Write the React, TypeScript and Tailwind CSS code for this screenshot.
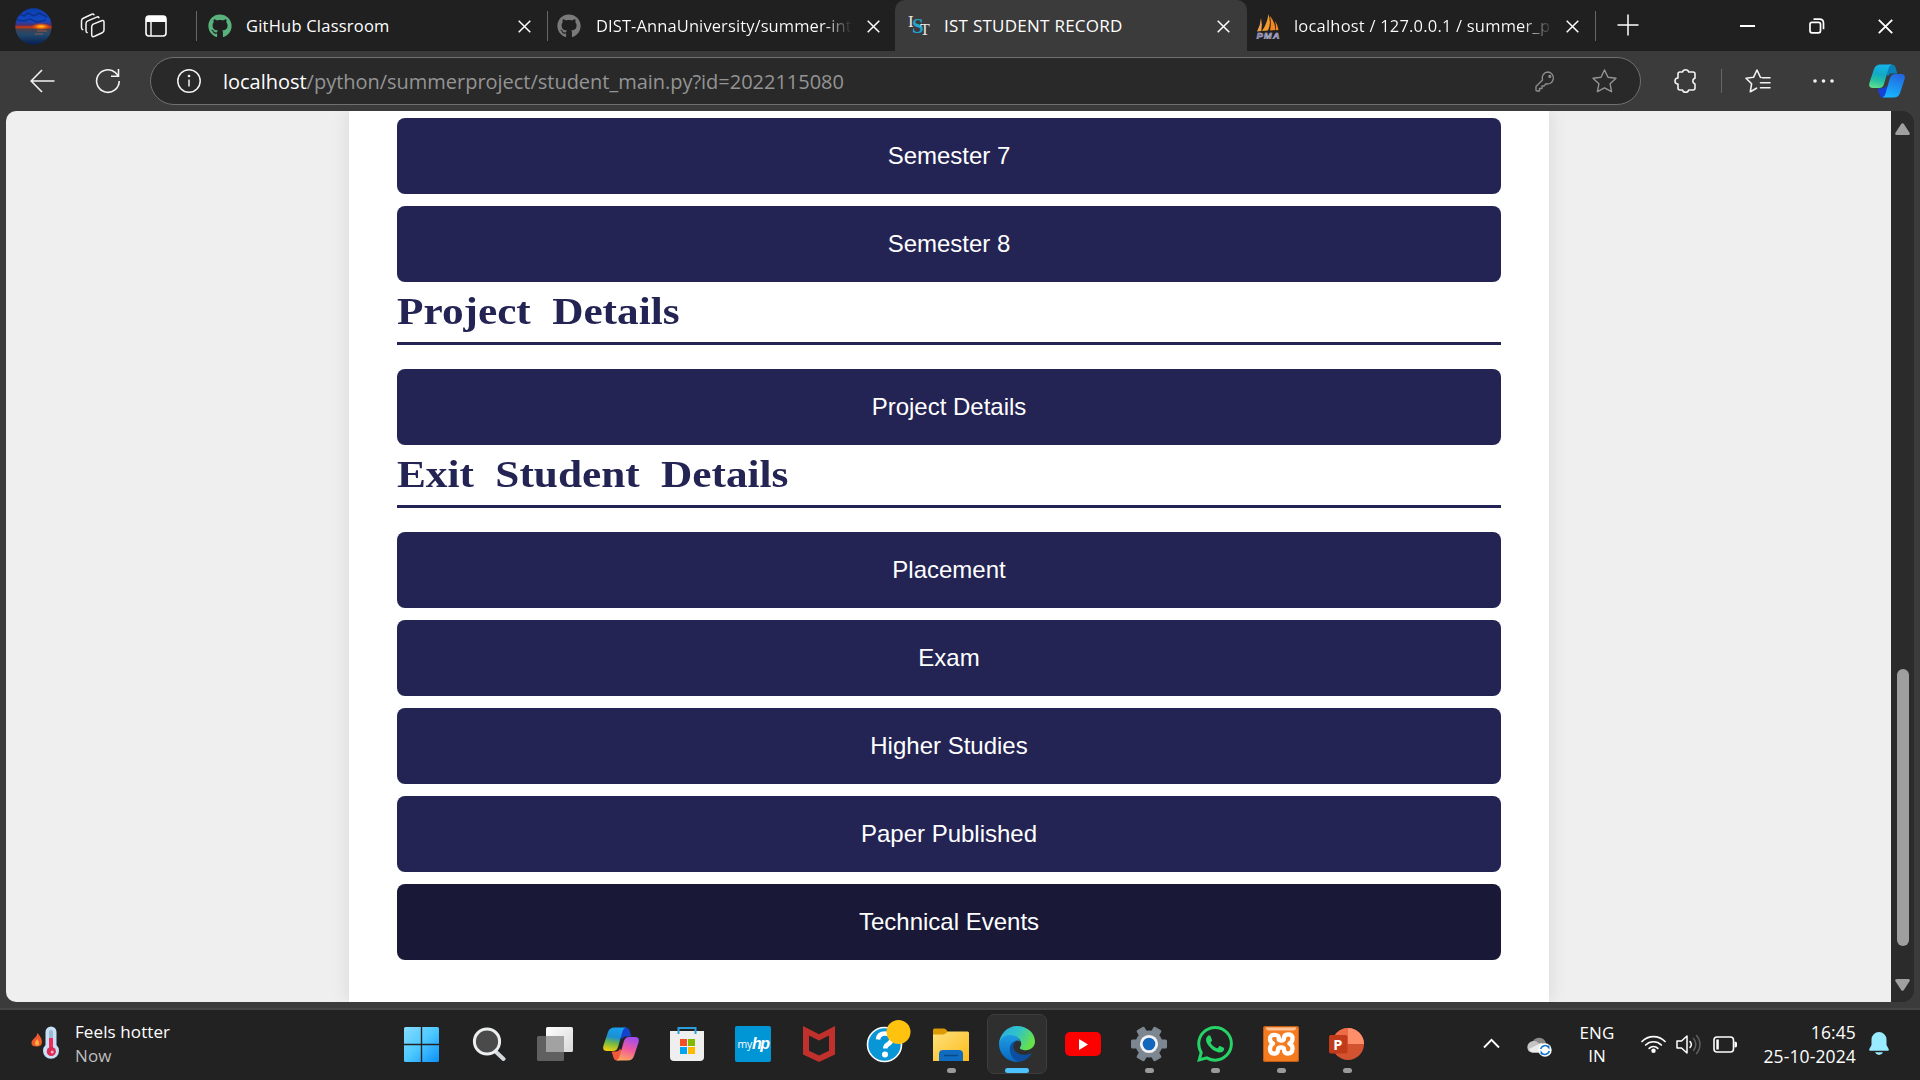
import type { ReactNode } from "react";
import { FaGithub } from "react-icons/fa";
import { SiWhatsapp } from "react-icons/si";

const ui = "font-['Open_Sans','Noto_Sans',sans-serif]";

function CloseIcon({ size = 13, w = 1.5 }: { size?: number; w?: number }) {
  return (
    <svg width={size} height={size} viewBox="0 0 13 13" fill="none" stroke="#fff" strokeWidth={w} className="shrink-0">
      <path d="M.7.7l11.6 11.6M12.3.7L.7 12.3" />
    </svg>
  );
}

function Avatar() {
  return (
    <svg width="37" height="37" viewBox="0 0 37 37" className="ml-[15px] shrink-0">
      <defs>
        <linearGradient id="sky" x1="0" y1="0" x2="0" y2="1">
          <stop offset="0" stopColor="#0b3fae" />
          <stop offset=".35" stopColor="#1448c4" />
          <stop offset=".46" stopColor="#4a2f72" />
          <stop offset=".52" stopColor="#d0390c" />
          <stop offset=".57" stopColor="#44414f" />
          <stop offset=".72" stopColor="#21486c" />
          <stop offset="1" stopColor="#061d52" />
        </linearGradient>
        <radialGradient id="sun">
          <stop offset="0" stopColor="#ffd21e" />
          <stop offset=".4" stopColor="#ff7a08" />
          <stop offset="1" stopColor="#ff3a00" stopOpacity="0" />
        </radialGradient>
        <clipPath id="avc"><circle cx="18.5" cy="18.5" r="18.2" /></clipPath>
      </defs>
      <g clipPath="url(#avc)">
        <rect width="37" height="37" fill="url(#sky)" />
        <path d="M4 6l5 2 4-3 6 3 5-3 8 4M2 12l7 1 6-2 7 3 9-2" stroke="#082a78" strokeWidth="1.5" fill="none" opacity=".7" />
        <ellipse cx="26" cy="18.5" rx="10" ry="3.6" fill="url(#sun)" />
        <path d="M22 23h10M20 26h8" stroke="#d9683a" opacity=".6" />
      </g>
    </svg>
  );
}

function TabSep() {
  return <div className="h-[30px] w-px shrink-0 bg-[#666]" />;
}

function TabBar() {
  return (
    <div className="flex h-[51px] w-full shrink-0 items-center bg-[#202020] pt-px text-[16.5px] text-white">
      <Avatar />
      <svg width="26" height="26" viewBox="0 0 26 26" fill="none" stroke="#f2f2f2" strokeWidth="1.5" strokeLinejoin="round" strokeLinecap="round" className="ml-[28px] shrink-0">
        <path d="M12.6 11.4l9-3.7q2.4-.8 2.4 1.6v7.6q0 2-1.8 2.8l-7.6 3.6q-2.9 1.2-2.9-1.5v-7.9q0-1.8 1.3-2.5z" />
        <path d="M7.2 19.6q-1.2-.4-1.2-2.2v-6.7q0-2 1.8-2.8l8.9-3.8q1.7-.6 2.2.5" />
        <path d="M2.7 16.6Q1.5 16 1.5 14.400V8q0-2 1.8-2.800L11.800 1.300q1.600-.6 2.200.5" />
      </svg>
      <svg width="22" height="22" viewBox="0 0 22 22" className="ml-[39px] shrink-0">
        <rect x="1" y="1" width="20" height="20" rx="3" fill="none" stroke="#fff" strokeWidth="1.6" />
        <path d="M1 7V4q0-3 3-3h14q3 0 3 3v3z" fill="#fff" />
        <path d="M6 7v14" stroke="#fff" strokeWidth="1.4" />
      </svg>
      <div className="ml-[29px] flex"><TabSep /></div>
      <div className="flex h-full w-[350px] shrink-0 items-center pl-[11px]">
        <FaGithub size={24} color="#59b17b" className="shrink-0" />
        <span className="ml-[14px] w-[272px] whitespace-nowrap tracking-[0.22px]">GitHub Classroom</span>
        <CloseIcon />
      </div>
      <TabSep />
      <div className="flex h-full w-[347px] shrink-0 items-center pl-[9px]">
        <FaGithub size={24} color="#7a7a7a" className="shrink-0" />
        <span className="ml-[15px] w-[259px] whitespace-nowrap bg-linear-to-r from-white from-88% to-[#202020] to-99% bg-clip-text tracking-[0.1px] text-transparent">
          DIST-AnnaUniversity/summer-int
        </span>
        <span className="ml-[12px]"><CloseIcon /></span>
      </div>
      <div className="-mt-px flex h-[51px] w-[352px] shrink-0 items-center rounded-t-[10px] bg-[#3b3b3b] pt-px pl-[13px]">
        <svg width="24" height="24" viewBox="0 0 24 24" className="shrink-0 font-['Liberation_Serif',serif]">
          <text x="0" y="13" fontSize="17" fill="#e8e8e8">I</text>
          <text x="4" y="19" fontSize="21" fill="#1fa6d0" fontWeight="bold">S</text>
          <text x="12" y="21" fontSize="16" fill="#e8e8e8">T</text>
        </svg>
        <span className="ml-[12px] w-[273px] text-[17px] whitespace-nowrap tracking-[0.26px]">IST STUDENT RECORD</span>
        <CloseIcon />
      </div>
      <div className="flex h-full w-[348px] shrink-0 items-center pl-[9px]">
        <svg width="24" height="25" viewBox="0 0 24 25" className="shrink-0">
          <path d="M5 4q1.500 7 .3 13l-4.300.6Q4.500 11 5 4z" fill="#f0a04b" />
          <path d="M12.500 0q3 9-.5 16.500l-6 .5Q11 10 12.500 0z" fill="#f39c2d" />
          <path d="M14 2q5 6 5.500 14l-5.500.5Q15.500 9 14 2zM19 7q3 4 3.500 9l-2.500.3Q20.300 11 19 7z" fill="#f5871f" />
          <text x="0.500" y="24.500" fontSize="9.500" fontWeight="bold" fontStyle="italic" fontFamily="Liberation Sans" fill="#5c5c9c" stroke="#c9c9dc" strokeWidth=".5" textLength="23">PMA</text>
        </svg>
        <span className="ml-[14px] w-[260px] whitespace-nowrap bg-linear-to-r from-white from-88% to-[#202020] bg-clip-text tracking-[0.2px] text-transparent">
          localhost / 127.0.0.1 / summer_p
        </span>
        <span className="ml-[12px]"><CloseIcon /></span>
      </div>
      <TabSep />
      <svg width="22" height="22" viewBox="0 0 22 22" stroke="#fff" strokeWidth="1.5" className="-mt-[3px] ml-[21px] shrink-0"><path d="M11 .5v21M.5 11h21" /></svg>
      <div className="-mt-px ml-[101px] h-[2px] w-[15px] bg-white" />
      <svg width="16" height="16" viewBox="0 0 16 16" fill="none" stroke="#fff" strokeWidth="1.7" className="ml-[54px] shrink-0">
        <rect x="1" y="4.300" width="10.500" height="10.500" rx="2" />
        <path d="M4.500 1.200h6q4 0 4 4v6" />
      </svg>
      <span className="ml-[53px]"><CloseIcon size={15} w={1.6} /></span>
    </div>
  );
}

function CopilotMark({ blue, size }: { blue?: boolean; size: number }) {
  const p = blue ? "b" : "c";
  return (
    <svg width={size} height={size} viewBox="0 0 36 36" className="shrink-0">
      <defs>
        <linearGradient id={p + "1"} x1=".5" y1="0" x2=".3" y2="1">
          <stop offset="0" stopColor={blue ? "#12b4ea" : "#18a0f0"} />
          <stop offset=".4" stopColor={blue ? "#14a9c6" : "#1c8fd0"} />
          <stop offset=".65" stopColor={blue ? "#22bda6" : "#6cb84a"} />
          <stop offset="1" stopColor={blue ? "#5fe08c" : "#f2cf0e"} />
        </linearGradient>
        <linearGradient id={p + "2"} x1=".6" y1="0" x2=".3" y2="1">
          <stop offset="0" stopColor={blue ? "#2468e0" : "#a24df0"} />
          <stop offset=".5" stopColor={blue ? "#1b90f0" : "#ee5a9c"} />
          <stop offset="1" stopColor={blue ? "#18b8ff" : "#ffa65c"} />
        </linearGradient>
      </defs>
      <path d="M20 1.500h3q2.600 0 3.400 2.500l2 6.500H23q-3 0-4 3L16 8z" fill={blue ? "#0880b8" : "#1542cc"} />
      <path d="M16 34.500h-2q-2.600 0-3.400-2.500l-2-6.500H13q3 0 4-3l3 5z" fill={blue ? "#1740d8" : "#f0583a"} />
      <path d="M11.500 1.500H23q-2.500.5-3.500 4l-4.300 15q-1.200 4.500-5.200 4.500H4q-5 0-3.500-5.500L5 6q1.500-4.500 6.500-4.500z" fill={`url(#${p}1)`} />
      <path d="M24.500 34.500H13q2.500-.5 3.500-4l4.300-15q1.200-4.500 5.200-4.500h6q5 0 3.500 5.500L31 30q-1.500 4.500-6.500 4.500z" fill={`url(#${p}2)`} />
    </svg>
  );
}

function Toolbar() {
  return (
    <div className="flex h-[60px] w-full shrink-0 items-center bg-[#3b3b3b] pl-[30px]">
      <svg width="25" height="24" viewBox="0 0 25 24" fill="none" stroke="#f2f2f2" strokeWidth="1.600" className="shrink-0"><path d="M12 1L1.200 12 12 23M1.200 12H24.500" /></svg>
      <svg width="26" height="26" viewBox="0 0 26 26" fill="none" stroke="#f2f2f2" strokeWidth="1.600" className="ml-[40px] shrink-0">
        <path d="M24.200 13A11.300 11.300 0 1 1 20.500 4.700L23.500 8M23.500 1v7.200h-7.500" />
      </svg>
      <div className="ml-[29px] flex h-[48px] w-[1491px] shrink-0 items-center rounded-full border border-[#707070] bg-[#292929] pl-[26px]">
        <svg width="24" height="24" viewBox="0 0 24 24" fill="none" stroke="#f2f2f2" strokeWidth="1.500" className="shrink-0">
          <circle cx="12" cy="12" r="11.200" /><path d="M12 10.500v7" /><circle cx="12" cy="7" r=".6" fill="#fff" />
        </svg>
        <span className="ml-[22px] w-[1312px] pt-px text-[20px] whitespace-nowrap tracking-[-0.02px] text-[#949494]">
          <span className="text-white">localhost</span>/python/summerproject/student_main.py?id=2022115080
        </span>
        <svg width="20" height="21" viewBox="0 0 20 21" fill="none" stroke="#8c8c8c" strokeWidth="1.400" strokeLinejoin="round" className="shrink-0">
          <path d="M13 1a6 6 0 0 0-5.500 8L1 15.500V19q0 1 1 1h2.500v-2.500H7V15h2l2-2.200A6 6 0 1 0 13 1z" /><circle cx="14.800" cy="5.400" r=".9" />
        </svg>
        <svg width="25" height="24" viewBox="0 0 25 24" fill="none" stroke="#949494" strokeWidth="1.400" strokeLinejoin="round" className="ml-[37px] shrink-0">
          <path d="M12.500 1l3.500 7.300 8 1-5.900 5.500 1.500 7.900-7.100-3.900-7.100 3.900 1.500-7.900L1 9.300l8-1z" />
        </svg>
      </div>
      <svg width="24" height="26" viewBox="0 0 24 26" fill="none" stroke="#f2f2f2" strokeWidth="1.600" strokeLinejoin="round" className="ml-[32px] shrink-0">
        <path d="M9.500 4a3.200 3 0 0 1 6.200 0H20q2 0 2 2v4.300a2.900 2.900 0 0 0 0 5.600V20q0 2-2 2h-4.300a3.200 3 0 0 1-6.200 0H7q-2 0-2-2v-4a3 3 0 0 1 0-6V6q0-2 2-2z" />
      </svg>
      <div className="ml-[24px] h-[24px] w-px bg-[#666]" />
      <svg width="26" height="24" viewBox="0 0 26 24" fill="none" stroke="#f2f2f2" strokeWidth="1.600" strokeLinejoin="round" strokeLinecap="round" className="ml-[23px] shrink-0">
        <path d="M16 8.500h-.5L12 1 8.500 8.300 1 9.300l5.600 5.500L5.300 22.700l6.200-3.500M17.500 8.800h7.500M15.500 13.800h9.500M15.500 18.700h9.500" />
      </svg>
      <svg width="21" height="4" viewBox="0 0 21 4" fill="#f2f2f2" className="ml-[42px] shrink-0"><circle cx="2" cy="2" r="1.800" /><circle cx="10.500" cy="2" r="1.800" /><circle cx="19" cy="2" r="1.800" /></svg>
      <span className="ml-[35px]"><CopilotMark blue size={36} /></span>
    </div>
  );
}

function MenuButton({ label, hovered }: { label: string; hovered?: boolean }) {
  return (
    <button
      className={
        "flex h-[76px] w-full shrink-0 items-center justify-center rounded-[8px] font-['Liberation_Sans',sans-serif] text-[24px] text-white " +
        (hovered ? "bg-[#191937]" : "bg-[#242454]")
      }
    >
      {label}
    </button>
  );
}

function SectionTitle({ children }: { children: ReactNode }) {
  return (
    <h2 className="mb-[24px] h-[63px] w-full shrink-0 border-b-[3px] border-[#242454] pt-[9px] font-['Liberation_Serif',serif] text-[37px] leading-[42px] font-bold whitespace-nowrap text-[#242454] [word-spacing:9px]">
      <span className="inline-block origin-left scale-x-[1.17]">{children}</span>
    </h2>
  );
}

function Page() {
  return (
    <div className="flex h-[891px] w-[1885px] overflow-hidden rounded-l-[10px] bg-[#efefef]">
      <main className="ml-[343px] flex h-[891px] w-[1200px] flex-col bg-white px-[48px] pt-[7px] shadow-[0_0_19px_rgba(0,0,0,0.1)]">
        <div className="flex flex-col gap-3">
          <MenuButton label="Semester 7" />
          <MenuButton label="Semester 8" />
        </div>
        <SectionTitle>Project Details</SectionTitle>
        <MenuButton label="Project Details" />
        <SectionTitle>Exit Student Details</SectionTitle>
        <div className="flex flex-col gap-3">
          <MenuButton label="Placement" />
          <MenuButton label="Exam" />
          <MenuButton label="Higher Studies" />
          <MenuButton label="Paper Published" />
          <MenuButton label="Technical Events" hovered />
        </div>
      </main>
    </div>
  );
}

function ScrollBar() {
  return (
    <div className="flex h-[891px] w-[23px] flex-col items-center rounded-r-[12px] bg-[#2b2b2b] pt-[12px]">
      <svg width="15" height="12" viewBox="0 0 15 12" fill="#a0a0a0"><path d="M6.300.8q1.200-1.200 2.400 0l6 9.200q.5 2-1.500 2H1.800q-2 0-1.500-2z" /></svg>
      <div className="mt-[534px] h-[277px] w-[12px] rounded-full bg-[#9f9f9f]" />
      <svg width="15" height="12" viewBox="0 0 15 12" fill="#a0a0a0" className="mt-[33px]"><path d="M6.300 11.200q1.200 1.200 2.400 0l6-9.200q.5-2-1.500-2H1.800q-2 0-1.500 2z" /></svg>
    </div>
  );
}

function TaskIcon({ children, running, active }: { children: ReactNode; running?: boolean; active?: boolean }) {
  return (
    <div className={"relative flex h-[60px] w-[60px] shrink-0 items-center justify-center rounded-[7px] " + (active ? "border border-[#3d3d3d] bg-[#2f2f2f]" : "")}>
      {children}
      {running && <div className="absolute bottom-px left-[25.5px] h-[5px] w-[9px] rounded-full bg-[#9a9a9a]" />}
      {active && <div className="absolute bottom-0 left-[17px] h-[5px] w-[24px] rounded-full bg-[#4cc2ff]" />}
    </div>
  );
}

function Apps() {
  return (
    <div className="flex gap-[6px]">
      <div className="mr-[2px]">
        <TaskIcon>
          <svg width="35" height="35" viewBox="0 0 35 35">
            <defs><linearGradient id="win" gradientUnits="userSpaceOnUse" x1="0" y1="0" x2="35" y2="35"><stop offset="0" stopColor="#88dcfc" /><stop offset=".5" stopColor="#4cc8ff" /><stop offset="1" stopColor="#0c90fa" /></linearGradient></defs>
            <g fill="url(#win)"><path d="M1.500 0H16.800v16.800H0V1.500Q0 0 1.500 0z" /><path d="M18.200 0H33.500Q35 0 35 1.500v15.300H18.200z" /><path d="M0 18.200h16.800V35H1.500Q0 35 0 33.500z" /><path d="M18.200 18.200H35v15.300q0 1.500-1.500 1.500H18.200z" /></g>
          </svg>
        </TaskIcon>
      </div>
      <TaskIcon>
        <svg width="34" height="36" viewBox="0 0 34 36" fill="none">
          <path d="M23 25l8.500 8" stroke="#d5d9dc" strokeWidth="4" strokeLinecap="round" />
          <circle cx="15" cy="15.500" r="12.600" fill="#4a4a4a" stroke="#eceeef" strokeWidth="3" />
        </svg>
      </TaskIcon>
      <TaskIcon>
        <svg width="36" height="34" viewBox="0 0 36 34">
          <defs><linearGradient id="tv" x1="0" y1="0" x2="1" y2="1"><stop offset="0" stopColor="#fff" /><stop offset="1" stopColor="#d8d8d8" /></linearGradient></defs>
          <rect x="9" y="0" width="27" height="25" rx="1.500" fill="url(#tv)" />
          <rect x="0" y="9" width="27" height="25" rx="1.500" fill="#606060" /><rect x="9" y="9" width="18" height="16" fill="#a2a2a2" />
        </svg>
      </TaskIcon>
      <TaskIcon><CopilotMark size={36} /></TaskIcon>
      <TaskIcon>
        <svg width="36" height="36" viewBox="0 0 36 36">
          <path d="M1 5h34v26q0 4-4 4H5q-4 0-4-4z" fill="#efefef" />
          <path d="M9.500 8V2h17v6" fill="none" stroke="#2a9fdb" strokeWidth="2" />
          <path d="M11 13h7v7h-7z" fill="#f25022" /><path d="M19 13h7v7h-7z" fill="#7fba00" /><path d="M11 21h7v7h-7z" fill="#00a4ef" /><path d="M19 21h7v7h-7z" fill="#ffb900" />
        </svg>
      </TaskIcon>
      <TaskIcon>
        <div className="flex h-[36px] w-[36px] items-center justify-center rounded-[2px] bg-[#0096d6] text-white">
          <span className="text-[10.500px] leading-none font-medium tracking-[-0.3px]">my</span>
          <span className="font-['Liberation_Sans',sans-serif] text-[16px] leading-none font-bold tracking-[-1.5px] italic">hp</span>
        </div>
      </TaskIcon>
      <TaskIcon>
        <svg width="32" height="36" viewBox="0 0 32 36" fill="#c0302c"><path fillRule="evenodd" d="M0 0l16 8.300L32 0v28.500L16 36 0 28.500zM6 9.500v15.300l10 4.700 10-4.700V9.500L16 14.500z" /></svg>
      </TaskIcon>
      <TaskIcon>
        <svg width="46" height="44" viewBox="0 0 46 44" className="mt-[-7px] ml-[7px]">
          <circle cx="18.500" cy="25.500" r="17" fill="#0996d6" stroke="#fff" strokeWidth="1.600" />
          <path d="M12 20.500q.5-6 7-6 6.500 0 6.500 5.500 0 3.300-3.500 5.300-2.700 1.500-2.700 4.200" fill="none" stroke="#fff" strokeWidth="4.500" /><circle cx="19" cy="35.500" r="3" fill="#fff" />
          <circle cx="32.500" cy="13" r="12" fill="#ffc20e" />
        </svg>
      </TaskIcon>
      <TaskIcon running>
        <svg width="36" height="34" viewBox="0 0 36 34" className="mt-[1px]">
          <defs><linearGradient id="fo" x1="0" y1="0" x2="1" y2="1"><stop offset="0" stopColor="#ffe07c" /><stop offset="1" stopColor="#fcbc1c" /></linearGradient></defs>
          <path d="M0 8V2Q0 .5 1.500.5H11q1.500 0 2.500 1.500l2.500 3v4z" fill="#dd9a00" />
          <path d="M0 6.500h11l4-3H34.500q1.500 0 1.500 1.500v28H0z" fill="url(#fo)" />
          <path d="M6 33v-7q0-4 4-4h16q4 0 4 4v7z" fill="#0f6cc0" /><path d="M11 27.500h14" stroke="#0a4a86" strokeWidth="1.500" />
        </svg>
      </TaskIcon>
      <TaskIcon active>
        <svg width="36" height="36" viewBox="0 0 256 256">
          <defs>
            <linearGradient id="e1" x1="0" y1="0" x2="1" y2=".4"><stop offset="0" stopColor="#2aa9e0" /><stop offset=".55" stopColor="#30c4c8" /><stop offset="1" stopColor="#66e04c" /></linearGradient>
            <linearGradient id="e2" x1="0" y1="0" x2="0" y2="1"><stop offset="0" stopColor="#1f9ee4" /><stop offset="1" stopColor="#0868c0" /></linearGradient>
          </defs>
          <path d="M235 190c-20 40-60 65-106 66-50-8-78-50-68-98 8-34 40-55 67-54-26 14-34 44-18 68 24 36 82 44 125 18z" fill="#0c4fa0" />
          <path d="M128 256C58 256 2 200 0 132 2 86 38 58 78 58c36 0 66 20 72 58-4-8-14-14-26-12-34 4-52 36-46 74 6 40 30 68 62 77z" fill="url(#e2)" />
          <path d="M0 130C4 56 60 0 128 0c72 0 128 50 128 110 0 38-30 62-64 62-26 0-44-8-44-16 0-6 10-12 10-30 0-32-34-62-80-62-42 0-70 30-78 66z" fill="url(#e1)" />
        </svg>
      </TaskIcon>
      <TaskIcon>
        <div className="flex h-[24px] w-[36px] items-center justify-center rounded-[5px] bg-[#fe0000]">
          <svg width="9" height="11" viewBox="0 0 9 11" fill="#fff"><path d="M0 0l9 5.500L0 11z" /></svg>
        </div>
      </TaskIcon>
      <TaskIcon running>
        <svg width="36" height="36" viewBox="0 0 36 36">
          <g fill="#7c8791">
            {[0, 60, 120].map((a) => (
              <rect key={a} x="0" y="13.500" width="36" height="9" rx="1.500" transform={`rotate(${a} 18 18)`} />
            ))}
            <circle cx="18" cy="18" r="13.500" />
          </g>
          <circle cx="18" cy="18" r="7.700" fill="#1166be" stroke="#f2f2f2" strokeWidth="2.800" />
        </svg>
      </TaskIcon>
      <TaskIcon running><SiWhatsapp size={36} color="#25d366" /></TaskIcon>
      <TaskIcon running>
        <svg width="36" height="36" viewBox="0 0 36 36">
          <rect width="36" height="36" rx="2.500" fill="#f47b20" /><path d="M3 1.500h30q0 3-3 3H6q-3 0-3-3z" fill="#fbc49a" />
          <rect x=".5" y=".5" width="35" height="35" rx="2.500" fill="none" stroke="#c05c14" />
          <path d="M13 9q-6-1-6 4 0 3 3 4.500-3 2-3 5.500 0 5 5 4.500 3 0 3-4 0-2 3-2t3 2q0 4 3.500 4 5 0 5-5 0-3.500-3-5 3-1.500 3-5 0-4.500-5-4-3.500 0-3.500 4 0 2-3 2t-2-2q0-3-3-3.500z" fill="none" stroke="#fff" strokeWidth="4.300" strokeLinejoin="round" />
        </svg>
      </TaskIcon>
      <TaskIcon running>
        <svg width="36" height="34" viewBox="0 0 36 34">
          <circle cx="19" cy="17" r="16" fill="#d35230" /><path d="M19 1a16 16 0 0 1 16 16H19z" fill="#ff8f6b" /><path d="M19 1A16 16 0 0 0 3 17h16z" fill="#ed6c47" />
          <rect x="0" y="8" width="18.500" height="18.500" rx="1.700" fill="#c13b1b" />
          <text x="4.300" y="22.500" fontSize="14.500" fontWeight="bold" fontFamily="Open Sans" fill="#fff">P</text>
        </svg>
      </TaskIcon>
    </div>
  );
}

function Tray() {
  return (
    <div className="flex h-full items-center text-[16.500px] text-white">
      <svg width="17" height="11" viewBox="0 0 17 11" fill="none" stroke="#fff" strokeWidth="1.900" className="-mt-px shrink-0"><path d="M1 9.500l7.500-7.700L16 9.500" /></svg>
      <svg width="26" height="22" viewBox="0 0 26 22" className="mt-[4px] ml-[27px] shrink-0">
        <path d="M5 9a7 6.500 0 0 1 14 .5l-8 5z" fill="#8b8b8b" /><path d="M6 6a6 6 0 0 1 6 2.500L20 10v7.500H5Q.5 17 .3 12 .8 7 6 6z" fill="#c4c4c4" /><path d="M2 14l12-6 8 3v6.500H5Q3 17 2 14z" fill="#ececec" />
        <circle cx="18" cy="15" r="6.700" fill="#fff" /><path d="M13.700 14a4.500 4.500 0 0 1 8-1.500V10.500M22.300 16a4.500 4.500 0 0 1-8 1.500v2" fill="none" stroke="#1473c8" strokeWidth="1.500" />
      </svg>
      <div className="ml-[22px] w-[44px] shrink-0 text-center text-[17px] leading-[23px] tracking-[0.1px]"><div>ENG</div><div>IN</div></div>
      <svg width="25" height="18" viewBox="0 0 25 18" fill="none" stroke="#fff" strokeWidth="1.700" strokeLinecap="round" className="ml-[22px] shrink-0">
        <path d="M1 6.500a16 16 0 0 1 23 0M4.700 10a11 11 0 0 1 15.600 0M8.200 13.300a6 6 0 0 1 8.600 0" /><circle cx="12.500" cy="15.700" r="1.400" fill="#fff" />
      </svg>
      <svg width="26" height="21" viewBox="0 0 26 21" fill="none" strokeWidth="1.500" strokeLinejoin="round" strokeLinecap="round" className="ml-[10px] shrink-0">
        <path d="M1 7h4.500l5.500-5v17l-5.500-5H1z" stroke="#fff" /><path d="M14 7.500a4.500 4.500 0 0 1 0 6" stroke="#fff" /><path d="M17.500 4.500a9 9 0 0 1 0 12M20.500 1.500a13.500 13.500 0 0 1 0 18" stroke="#606060" />
      </svg>
      <svg width="25" height="17" viewBox="0 0 25 17" fill="none" className="ml-[11px] shrink-0">
        <rect x="1" y="1" width="19.500" height="15" rx="3" stroke="#fff" strokeWidth="1.600" /><path d="M3.300 3.500h2.500v10H3.300z" fill="#fff" /><path d="M21.500 5.500q2.500 0 2.500 1.500v3q0 1.500-2.500 1.500z" fill="#fff" />
      </svg>
      <div className="ml-[18px] w-[100px] shrink-0 text-right text-[17.500px] leading-[24px] tracking-[0.12px] whitespace-nowrap"><div>16:45</div><div>25-10-2024</div></div>
      <svg width="20" height="24" viewBox="0 0 20 24" fill="#99ebff" className="ml-[13px] shrink-0"><path d="M10 0a7.500 7.500 0 0 0-7.500 7.500V13L.2 17.300Q0 18.700 1 18.700h18q1 0 .8-1.400L17.500 13V7.500A7.500 7.500 0 0 0 10 0zM6 20.300h8q-1 2.700-4 2.700t-4-2.700z" /></svg>
    </div>
  );
}

function Taskbar() {
  return (
    <div className="flex h-[70px] w-full shrink-0 items-start bg-[#222]">
      <div className="flex h-[70px] w-[391px] shrink-0 items-start pt-[16px] pl-[31px]">
        <svg width="29" height="35" viewBox="0 0 29 35" className="shrink-0">
          <path d="M6.500 7q-.5 3-3 5-3 2.500-3 5 0 3.500 5 3.500 5.500 0 5.500-4.500 0-4-4.500-9z" fill="#f0592e" /><path d="M6.500 13q-3 3-2.500 5 .7 2 3 1.500Q9.500 18.500 6.500 13z" fill="#ffb13c" />
          <path d="M20 .5a5.500 5.500 0 0 1 5.500 5.500V19a8 8 0 1 1-11 0V6A5.500 5.500 0 0 1 20 .5z" fill="#c8dff8" />
          <rect x="18" y="4" width="4" height="12" rx="2" fill="#9fb9cf" /><rect x="18" y="12" width="4" height="12" fill="#ec2d57" /><circle cx="20.300" cy="25.500" r="4.600" fill="#dd2a50" /><circle cx="21.200" cy="26" r="1.500" fill="#f6b5c6" />
        </svg>
        <div className="mt-[-6px] ml-[15px] text-[17px] leading-[24px] whitespace-nowrap text-white">
          <div className="tracking-[0.1px]">Feels hotter</div>
          <div className="tracking-[0.1px] text-[#bdbdbd]">Now</div>
        </div>
      </div>
      <div className="w-[1092px] shrink-0 pt-[4px]"><Apps /></div>
      <div className="h-[68px] shrink-0"><Tray /></div>
    </div>
  );
}

export default function App() {
  return (
    <div className={"flex h-[1080px] w-[1920px] flex-col overflow-hidden bg-[#3b3b3b] " + ui}>
      <TabBar />
      <Toolbar />
      <div className="flex h-[899px] w-full shrink-0 border-b-2 border-[#454545] pl-[6px]">
        <Page />
        <ScrollBar />
      </div>
      <Taskbar />
    </div>
  );
}
